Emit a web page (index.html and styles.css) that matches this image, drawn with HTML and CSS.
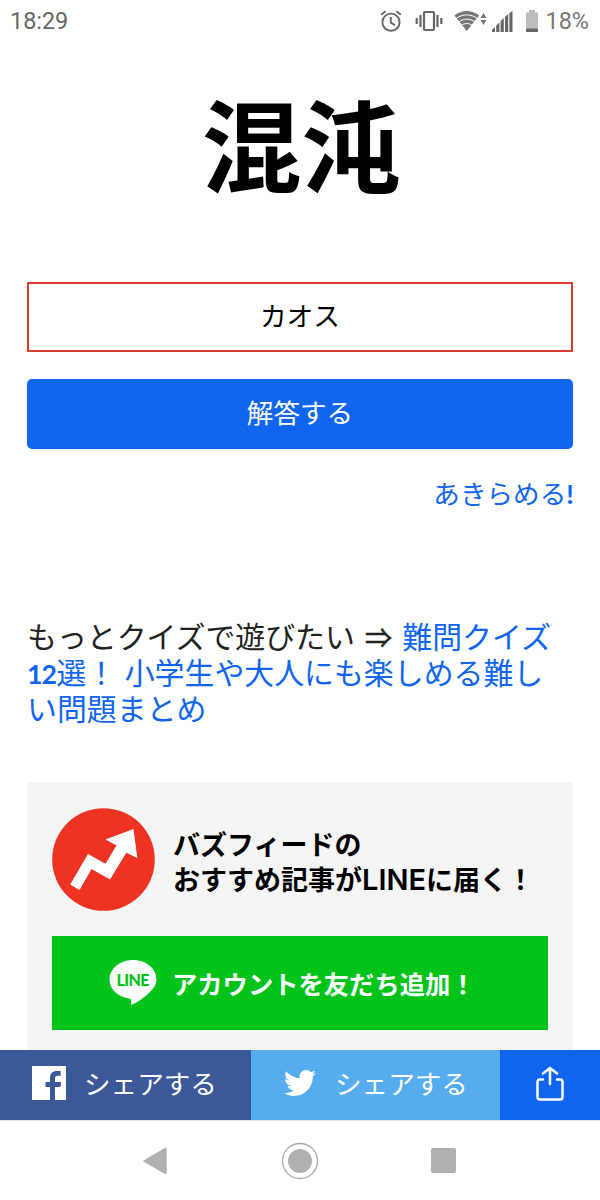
FILE: index.html
```html
<!DOCTYPE html>
<html lang="ja">
<head>
    <meta charset="UTF-8">
    <meta name="viewport" content="width=device-width, initial-scale=1.0">
    <title>難読漢字クイズ</title>
    <link rel="stylesheet" href="styles.css">
</head>
<body>
    <div class="status-bar">
        <span class="clock">18:29</span>
        <div class="status-icons">
            <svg class="icon-alarm" width="22" height="22" viewBox="0 0 22 22" fill="none" stroke="#666" stroke-width="1.9">
                <circle cx="11" cy="12.2" r="8.6"/>
                <path d="M10.8 7v5.6l4.2 2.6M1.2 4.8l4.4-3.6M20.8 4.8l-4.4-3.6"/>
            </svg>
            <svg class="icon-vibrate" width="28" height="22" viewBox="0 0 28 22" fill="none" stroke="#666" stroke-width="2.2">
                <rect x="9" y="2" width="10" height="18" rx="1"/>
                <path d="M5.5 5v12M22.5 5v12M1.7 8v6M26.3 8v6"/>
            </svg>
            <svg class="icon-wifi" width="34" height="22" viewBox="0 0 34 22">
                <path d="M.5 5.5C7.5-.5 18-.5 25 5.5L12.8 21z" fill="#777"/>
                <path d="M2 8.6c6.500-5 15-5 21.500 0M4.500 12c5-3.800 11.500-3.800 16.500 0M7.300 15.400c3.500-2.500 7.500-2.500 11 0" fill="none" stroke="#fff" stroke-width="1"/>
                <path d="M29.500 3l3 5h-6zM29.500 15l3-5h-6z" fill="#777"/>
            </svg>
            <svg class="icon-signal" width="21" height="21" viewBox="0 0 21 21" fill="#666">
                <path d="M0 21v-2l3-3v5zM4.200 21v-6.500l3.200-3V21zM8.600 21V10l3.200-3v14zM13 21V6l3.200-3v18zM17.400 21V2l3.100-2v21z"/>
            </svg>
            <svg class="icon-battery" width="14" height="22" viewBox="0 0 14 22">
                <path d="M1 2.500h3V0h6v2.500h3V22H1z" fill="#bdbdbd"/>
                <path d="M1 18.500h12V22H1z" fill="#666"/>
            </svg>
            <span class="battery-level">18%</span>
        </div>
    </div>

    <main class="quiz">
        <h1 class="kanji">混沌</h1>
        <input class="answer" type="text" value="カオス">
        <button class="submit">解答する</button>
        <a class="give-up">あきらめる<span class="latin">!</span></a>

        <p class="more">もっとクイズで遊びたい <span class="arrow">⇒</span> <a class="link">難問クイズ<br><span class="latin">12</span>選！ 小学生や大人にも楽しめる難し<br>い問題まとめ</a></p>

        <section class="line-banner">
            <div class="banner-head">
                <svg class="logo" width="103" height="103" viewBox="0 0 103 103">
                    <circle cx="51.500" cy="51.500" r="51.300" fill="#ee3322"/>
                    <path d="M18.200 76.500L36 46l17.500 9.800L64.500 37.500 53.500 31.500 81.500 21l3.800 29-11-5.200L58 71.600 39.500 61 27.500 82z" fill="#fff"/>
                </svg>
                <p class="banner-text">バズフィードの<br>おすすめ記事が<span class="roman">LINE</span>に届く！</p>
            </div>
            <a class="line-button">
                <svg class="line-icon" width="48" height="46" viewBox="0 0 48 46">
                    <path d="M24 0C11 0 .5 8.600.5 19.500c0 9.500 8 17.300 19.500 18.900 2.500.4 2.500 1.600 2 6.600 3-.5 13-7 18.500-12.500 4.500-4.500 7-8 7-13C47.500 8.600 37 0 24 0z" fill="#fff"/>
                    <text class="line-word" x="24" y="25.800" text-anchor="middle" textLength="33">LINE</text>
                </svg>
                <span>アカウントを友だち追加！</span>
            </a>
        </section>
    </main>

    <div class="share-bar">
        <a class="share facebook">
            <svg width="34" height="34" viewBox="0 0 34 34">
                <path d="M0 0h34v34H23V21h5.500l.6-5H23v-3.500c0-1.700.7-2.700 2.700-2.700h3V5.200C28 5 26.500 5 25 5c-4.500 0-7 2.500-7 7v4h-4.500v5H18v13H0z" fill="#fff"/>
            </svg>
            <span>シェアする</span>
        </a>
        <a class="share twitter">
            <svg width="32" height="32" viewBox="0 0 24 24" fill="#fff">
                <path d="M23.954 4.569c-.885.389-1.83.654-2.825.775 1.014-.611 1.794-1.574 2.163-2.723-.951.555-2.005.959-3.127 1.184-.896-.959-2.173-1.559-3.591-1.559-2.717 0-4.920 2.203-4.920 4.917 0 .39.045.765.127 1.124C7.691 8.094 4.066 6.130 1.640 3.161c-.427.722-.666 1.561-.666 2.475 0 1.710.87 3.213 2.188 4.096-.807-.026-1.566-.248-2.228-.616v.061c0 2.385 1.693 4.374 3.946 4.827-.413.111-.849.171-1.296.171-.314 0-.615-.03-.916-.086.631 1.953 2.445 3.377 4.604 3.417-1.680 1.319-3.809 2.105-6.102 2.105-.39 0-.779-.023-1.170-.067 2.189 1.394 4.768 2.209 7.557 2.209 9.054 0 13.999-7.496 13.999-13.986 0-.209 0-.42-.015-.63.961-.689 1.800-1.560 2.460-2.548z"/>
            </svg>
            <span>シェアする</span>
        </a>
        <a class="share other">
            <svg width="28" height="35" viewBox="0 0 28 35" fill="none" stroke="#fff" stroke-width="2.500" stroke-linecap="round" stroke-linejoin="round">
                <path d="M7 13.500H4A2.500 2.500 0 0 0 1.500 16v15A2.500 2.500 0 0 0 4 33.500h20a2.500 2.500 0 0 0 2.500-2.500V16a2.500 2.500 0 0 0-2.500-2.500h-3M14 18V2M7 7.500L14 2l7 5.500"/>
            </svg>
        </a>
    </div>

    <nav class="nav-bar">
        <svg width="24" height="28" viewBox="0 0 24 28" fill="#b0b0b0">
            <path d="M.8 13.200L21.500 1.200q2.200-1 2.200 1v23.600q0 2-2.200 1L.8 14.800q-1-.8 0-1.600z"/>
        </svg>
        <svg width="38" height="38" viewBox="0 0 38 38">
            <circle cx="20" cy="19" r="17.500" fill="none" stroke="#aaa" stroke-width="1.300"/>
            <circle cx="20" cy="19" r="12" fill="#b0b0b0"/>
        </svg>
        <svg width="25" height="25" viewBox="0 0 25 25">
            <rect width="25" height="25" rx="2" fill="#b0b0b0"/>
        </svg>
    </nav>
</body>
</html>
```

FILE: styles.css
```css
:root {
    --blue: #0f65ef;
    --jp: "Noto Sans CJK JP", sans-serif;
}

* {
    box-sizing: border-box;
}

body {
    margin: 0;
    width: 600px;
    height: 1200px;
    display: flex;
    flex-direction: column;
    overflow: hidden;
    background: #fff;
    color: #222;
    font-family: var(--jp);
}

.status-bar {
    display: flex;
    justify-content: space-between;
    height: 42px;
    flex: none;
    padding: 0 11px 0 10px;
    align-items: center;
    font-family: Roboto, sans-serif;
    font-size: 23.4px;
    color: #666;
}

.status-icons {
    display: flex;
    align-items: center;
}

.icon-vibrate {
    margin-left: 13px;
}

.icon-wifi {
    margin-left: 11px;
}

.icon-signal {
    margin-left: 4px;
}

.icon-battery {
    margin-left: 12px;
}

.battery-level {
    margin-left: 7px;
    color: #777;
}

.quiz {
    flex: 1;
    min-height: 0;
    overflow: hidden;
    padding: 0 27px;
    display: flex;
    flex-direction: column;
}

.kanji {
    margin: 28px 0 0;
    padding-left: 3px;
    height: 150px;
    flex: none;
    line-height: 145px;
    text-align: center;
    font-size: 99.5px;
    font-weight: 700;
    color: #000;
}

.answer {
    width: 546px;
    height: 70px;
    flex: none;
    margin-top: 62px;
    padding: 0 0 6px;
    border: 2px solid #e03c33;
    background: #fff;
    text-align: center;
    font: 26.6px var(--jp);
    color: #000;
}

.submit {
    height: 70px;
    flex: none;
    margin-top: 27px;
    padding: 0 0 6px;
    border: 0;
    border-radius: 5px;
    background: var(--blue);
    color: #fff;
    font: 26.6px var(--jp);
}

.give-up {
    align-self: flex-end;
    margin-top: 26px;
    line-height: 36px;
    font-size: 26.6px;
    color: var(--blue);
}

.latin {
    font-family: Lato, sans-serif;
    font-weight: 700;
    font-size: 26.6px;
    line-height: 0;
    letter-spacing: -0.8px;
}

.more {
    margin: 106px 0 0;
    font-size: 29.9px;
    line-height: 36px;
    word-spacing: 2px;
    white-space: nowrap;
}

.arrow {
    display: inline-block;
    width: 30px;
    text-align: center;
    font-size: 27px;
    line-height: 1;
    -webkit-text-stroke: 0.5px #222;
}

.link {
    color: var(--blue);
}

.line-banner {
    flex: none;
    height: 300px;
    margin-top: 57px;
    padding: 26px 25px;
    background: #f5f5f5;
}

.banner-head {
    display: flex;
    align-items: center;
    gap: 18px;
}

.banner-text {
    margin: 0;
    padding-top: 3px;
    font-size: 27px;
    line-height: 35px;
    font-weight: 700;
    color: #000;
    white-space: nowrap;
}

.roman {
    font: 600 29px/0 Inter, sans-serif;
}

.line-button {
    display: flex;
    align-items: center;
    height: 94px;
    margin-top: 25px;
    padding-left: 57px;
    gap: 15px;
    background: #00c31a;
    color: #fff;
    font-size: 25.3px;
    font-weight: 700;
}

.line-word {
    font: 900 16px Lato, sans-serif;
    fill: #00c31a;
}

.share-bar {
    display: flex;
    flex: none;
    height: 70px;
}

.share {
    display: flex;
    align-items: center;
    padding-bottom: 4px;
    color: #fff;
    font-size: 26.6px;
}

.share span {
    padding-bottom: 2px;
}

.facebook {
    width: 251px;
    padding-left: 32px;
    gap: 18px;
    background: #3b5998;
}

.twitter {
    width: 249px;
    padding-left: 33px;
    gap: 19px;
    background: #55acee;
}

.other {
    width: 100px;
    justify-content: center;
    background: var(--blue);
}

.nav-bar {
    display: flex;
    flex: none;
    height: 80px;
    padding: 0 144px 0 143px;
    justify-content: space-between;
    align-items: center;
    border-top: 1px solid #e4e4e4;
}
```
